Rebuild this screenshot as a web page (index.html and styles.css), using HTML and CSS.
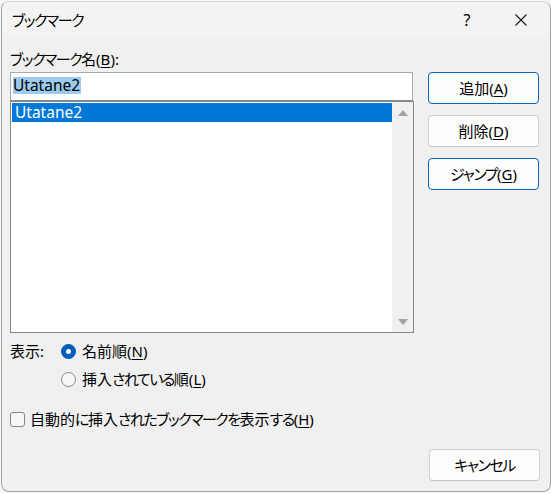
FILE: index.html
```html
<!DOCTYPE html>
<html lang="ja">
<head>
<meta charset="utf-8">
<title>ブックマーク</title>
<link rel="stylesheet" href="styles.css">
</head>
<body>
<div class="window">
  <div class="titlebar">
    <span class="title"><span class="k">ブックマーク</span></span>
    <span class="cap help">?</span>
    <span class="cap close">
      <svg width="12" height="12" viewBox="0 0 12 12"><path d="M0.5 0.5 L11.5 11.5 M11.5 0.5 L0.5 11.5" stroke="#1a1a1a" stroke-width="1.1" fill="none"/></svg>
    </span>
  </div>
  <div class="content">
    <div class="label"><span class="k">ブックマーク</span>名(<u>B</u>):</div>
    <div class="main">
      <div class="left">
        <div class="input"><span class="sel-text">Utatane2</span></div>
        <div class="list">
          <div class="items">
            <div class="item selected">Utatane2</div>
          </div>
          <div class="scrollbar">
            <span class="arrow up"></span>
            <span class="arrow down"></span>
          </div>
        </div>
      </div>
      <div class="right">
        <div class="btn primary">追加(<u>A</u>)</div>
        <div class="btn">削除(<u>D</u>)</div>
        <div class="btn primary"><span class="k">ジャンプ</span>(<u>G</u>)</div>
      </div>
    </div>
    <div class="show">
      <div class="show-label">表示:</div>
      <div class="radio-row"><span class="radio checked"></span><span>名前順(<u>N</u>)</span></div>
      <div></div>
      <div class="radio-row"><span class="radio"></span><span>挿入<span class="k">されている</span>順(<u>L</u>)</span></div>
    </div>
    <div class="check-row"><span class="checkbox"></span><span>自動的<span class="k">に</span>挿入<span class="k">されたブックマークを</span>表示<span class="k">する</span>(<u>H</u>)</span></div>
    <div class="footer">
      <div class="btn"><span class="k">キャンセル</span></div>
    </div>
  </div>
</div>
</body>
</html>
```

FILE: styles.css
```css
html, body {
  margin: 0;
  padding: 0;
}
body {
  background: #f6f6f6;
  font-family: "Noto Sans", "Noto Sans CJK JP", sans-serif;
  font-size: 15px;
  color: #000;
  font-feature-settings: "palt";
}
.k {
  letter-spacing: -1.5px;
}
.window {
  box-sizing: border-box;
  margin: 1px 0 0 1px;
  width: 550px;
  height: 491px;
  border: 1px solid #a3a3a3;
  border-top-color: #d6d6d6;
  border-radius: 8px;
  background: #f0f0f0;
  overflow: hidden;
  display: flex;
  flex-direction: column;
}
.titlebar {
  height: 36px;
  background: #f3f3f3;
  display: flex;
  align-items: center;
  padding-left: 10px;
  line-height: 20px;
}
.title {
  flex: 1;
}
.cap {
  width: 46px;
  display: flex;
  justify-content: center;
  align-items: center;
}
.help {
  margin-right: 8px;
  font-size: 16px;
}
.close {
  margin-right: 6px;
}
.content {
  flex: 1;
  padding: 11px 10px 0 8px;
  line-height: 20px;
}
u {
  text-decoration-thickness: 1px;
  text-underline-offset: 2px;
}
.label {
  height: 20px;
  margin-bottom: 3px;
}
.main {
  display: flex;
  gap: 14px;
}
.left {
  width: 404px;
}
.input {
  box-sizing: border-box;
  width: 403px;
  height: 29px;
  border: 1px solid #a9a9a9;
  border-bottom-color: #8a8a8a;
  background: #fff;
  padding: 4px 0 0 2px;
  line-height: 17px;
  font-size: 15.5px;
}
.sel-text {
  background: #9ccaf0;
  display: inline-block;
  height: 17px;
  line-height: 17px;
  padding-right: 1px;
}
.list {
  box-sizing: border-box;
  width: 404px;
  height: 232px;
  border: 1px solid #828790;
  background: #fff;
  display: flex;
}
.items {
  flex: 1;
  padding: 1px 0 0 1px;
}
.item {
  height: 19px;
  line-height: 19px;
  font-size: 15.5px;
  padding-left: 3px;
}
.item.selected {
  background: #0078d7;
  color: #fff;
}
.scrollbar {
  width: 21px;
  background: #f0f0f0;
  display: flex;
  flex-direction: column;
  justify-content: space-between;
  align-items: center;
  padding: 8px 0 7px;
  box-sizing: border-box;
}
.arrow {
  width: 0;
  height: 0;
  border-left: 5px solid transparent;
  border-right: 5px solid transparent;
}
.arrow.up {
  border-bottom: 6px solid #a3a3a3;
}
.arrow.down {
  border-top: 6px solid #a3a3a3;
}
.right {
  width: 111px;
  display: flex;
  flex-direction: column;
  gap: 11px;
}
.btn {
  box-sizing: border-box;
  height: 32px;
  width: 111px;
  border: 1px solid #d0d0d0;
  border-bottom-color: #c4c4c4;
  border-radius: 4px;
  background: #fdfdfd;
  display: flex;
  align-items: center;
  justify-content: center;
}
.btn.primary {
  border-color: #0067c0;
}
.show {
  margin-top: 6px;
  display: grid;
  grid-template-columns: 51px auto;
  grid-auto-rows: 24px;
  row-gap: 4px;
  align-items: center;
}
.radio-row, .check-row {
  display: flex;
  align-items: center;
}
.radio {
  box-sizing: border-box;
  width: 15px;
  height: 15px;
  border-radius: 50%;
  border: 1px solid #878787;
  background: #f6f6f6;
  margin-right: 6px;
}
.radio.checked {
  border: 5px solid #005fb8;
  background: #fff;
}
.check-row {
  margin-top: 16px;
  height: 24px;
}
.checkbox {
  box-sizing: border-box;
  width: 15px;
  height: 15px;
  border: 1px solid #878787;
  border-radius: 3px;
  background: #f6f6f6;
  margin-right: 5px;
}
.footer {
  margin-top: 18px;
  display: flex;
  justify-content: flex-end;
}
```
